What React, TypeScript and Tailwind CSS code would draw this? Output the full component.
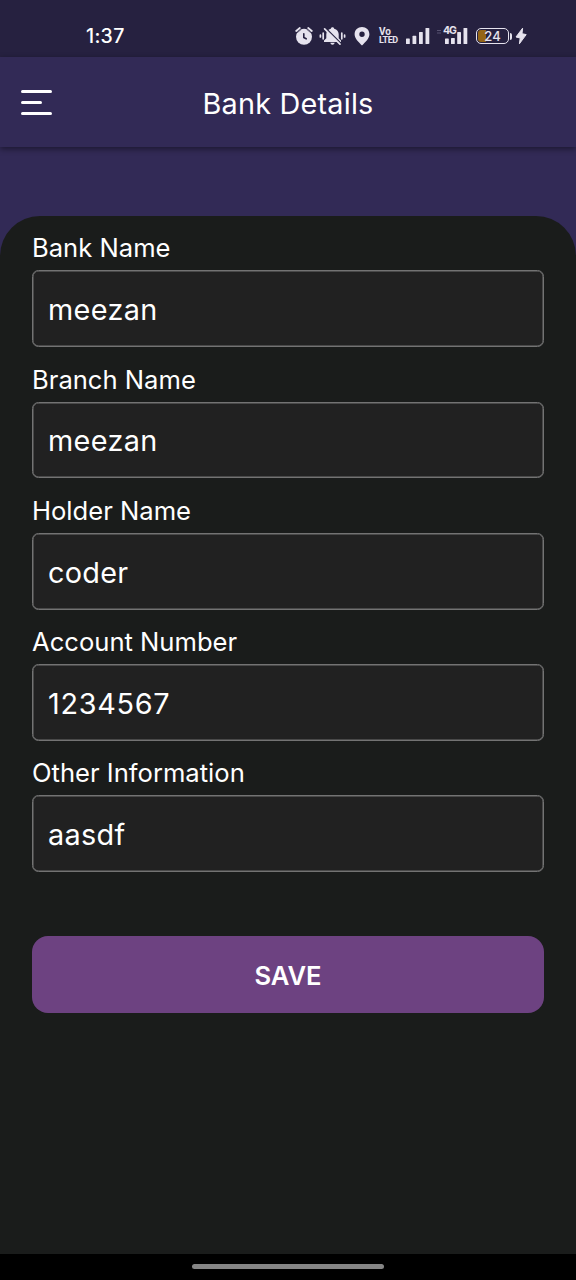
import React from "react";

const fields = [
  { label: "Bank Name", value: "meezan", tracking: "tracking-[0.35px]" },
  { label: "Branch Name", value: "meezan", tracking: "tracking-[0.35px]" },
  { label: "Holder Name", value: "coder", tracking: "tracking-[0.3px]" },
  { label: "Account Number", value: "1234567", tracking: "tracking-[0.7px]" },
  { label: "Other Information", value: "aasdf", tracking: "tracking-[0.35px]" },
];

function AlarmIcon() {
  return (
    <svg className="h-5 w-[18px]" viewBox="0 0 18 20" fill="none">
      <circle cx="9" cy="10.8" r="8" fill="#e6e3ee" />
      <path d="M1.2 5 4.8 2M16.8 5 13.2 2" stroke="#e6e3ee" strokeWidth="1.8" strokeLinecap="round" />
      <path d="M2.4 6.6 6.4 3.2M15.6 6.6 11.6 3.2" stroke="#262140" strokeWidth="0.7" />
      <path d="M8.8 7.8v3.7l2.4 1.3" stroke="#262140" strokeWidth="1.6" strokeLinecap="round" />
    </svg>
  );
}

function MutedBellIcon() {
  return (
    <svg className="ml-1.5 h-5 w-[27px]" viewBox="0 0 27 20" fill="none">
      <path d="M13.5 1.2c1 0 1.6.6 1.7 1.5 2.8.8 4.5 2.8 4.5 5.600v3.900l2.300 2.300v1.600H5v-1.600l2.300-2.300V8.300c0-2.800 1.700-4.800 4.500-5.600.1-.9.7-1.500 1.700-1.500Z" fill="#e6e3ee" />
      <path d="M11.3 16.8h4.400c-.3 1.300-1.100 2-2.200 2s-1.900-.7-2.200-2Z" fill="#e6e3ee" />
      <path d="M6.800 2.400 22.300 17.900" stroke="#262140" strokeWidth="1.5" />
      <path d="M5.600 2.800 21 18.200" stroke="#e6e3ee" strokeWidth="1.700" strokeLinecap="round" />
      <path d="M1.400 9.200v1.800M4.200 7.200v5.600M22.800 7.200v5.600M25.600 9.200v1.800" stroke="#e6e3ee" strokeWidth="1.700" strokeLinecap="round" />
    </svg>
  );
}

function PinIcon() {
  return (
    <svg className="ml-2 h-5 w-4" viewBox="0 0 16 20">
      <path fillRule="evenodd" d="M8 1C3.8 1 .6 4.1.6 8.2.6 12.5 4.500 16 8 19.400c3.500-3.400 7.400-6.900 7.400-11.200C15.400 4.100 12.200 1 8 1Zm0 4.600a2.700 2.700 0 1 1 0 5.400 2.700 2.700 0 0 1 0-5.400Z" fill="#e6e3ee" />
    </svg>
  );
}

function SignalIcon() {
  return (
    <svg className="ml-[8px] h-5 w-6" viewBox="0 0 24 20" fill="#e6e3ee">
      <rect x="0" y="12.5" width="3.8" height="5.5" rx=".6" />
      <rect x="6.5" y="9.8" width="3.8" height="8.2" rx=".6" />
      <rect x="13" y="6" width="3.8" height="12" rx=".6" />
      <rect x="19.5" y="2" width="3.8" height="16" rx=".6" />
    </svg>
  );
}

function MobileDataIcon() {
  return (
    <div className="relative ml-[6px] h-5 w-8">
      <svg className="h-5 w-8" viewBox="0 0 32 20" fill="#e6e3ee">
        <path d="M1 4.500h4M1 7h4" stroke="#575270" strokeWidth="1.2" />
        <rect x="9" y="12.5" width="3.8" height="5.5" rx=".6" />
        <rect x="15" y="12" width="3.8" height="6" rx=".6" />
        <rect x="21.2" y="6" width="3.8" height="12" rx=".6" />
        <rect x="27.5" y="2" width="3.8" height="16" rx=".6" />
      </svg>
      <span className="absolute left-[7px] top-0 text-[10.5px] font-bold leading-[10px] tracking-[-1px]">4G</span>
    </div>
  );
}

function Battery() {
  return (
    <div className="ml-2 flex items-center">
      <div className="relative flex h-4 w-[33px] items-center justify-center overflow-hidden rounded-[5px] border-[1.5px] border-[#e6e3ee] bg-[#262140]">
        <div className="absolute bottom-[1px] left-[1px] top-[1px] w-[8px] rounded-l-[3px] bg-[#946516]" />
        <span className="relative text-[13px] font-medium leading-none">24</span>
      </div>
      <div className="ml-[1px] h-[7px] w-[1.5px] rounded-r bg-[#e6e3ee]" />
    </div>
  );
}

function BoltIcon() {
  return (
    <svg className="ml-[3px] h-5 w-3" viewBox="0 0 12 20" fill="#e6e3ee">
      <path d="M7.6 2.200 1 11l4.200 1-.8 5.800 6.800-9.200L7 7.700Z" stroke="#e6e3ee" strokeWidth="1" strokeLinejoin="round" />
    </svg>
  );
}

export default function App() {
  return (
    <div className="flex h-[1280px] w-[576px] flex-col overflow-hidden bg-[#322a56] font-['Inter',sans-serif] text-white">
      <div className="flex h-[57px] shrink-0 items-start bg-[#262140] text-[#e6e3ee]">
        <span className="ml-[86px] mt-[24px] w-[209px] text-[19.5px] font-medium leading-6 tracking-[0.3px] text-white">1:37</span>
        <div className="mt-[26px] flex h-5 items-center">
          <AlarmIcon />
          <MutedBellIcon />
          <PinIcon />
          <div className="ml-[9px] flex w-[19px] flex-col font-['Roboto',sans-serif] text-[10px] font-bold leading-[8.5px]">
            <span>Vo</span>
            <span className="text-[9px] tracking-[-0.4px]">LTED</span>
          </div>
          <SignalIcon />
          <MobileDataIcon />
          <Battery />
          <BoltIcon />
        </div>
      </div>
      <header className="grid h-[90px] shrink-0 grid-cols-[80px_1fr_80px] items-center bg-[#322a56] shadow-[0_2px_6px_rgba(0,0,0,0.45)]">
        <button aria-label="Menu" className="ml-[21px] flex flex-col gap-[8px]">
          <span className="h-[3px] w-[31px] rounded-full bg-white" />
          <span className="h-[3px] w-[21px] rounded-full bg-white" />
          <span className="h-[3px] w-[31px] rounded-full bg-white" />
        </button>
        <h1 className="pt-[3px] text-center text-[28.8px] font-normal leading-9 tracking-[0.22px]">Bank Details</h1>
      </header>
      <main className="mt-[69px] flex grow flex-col rounded-t-[40px] bg-[#1a1c1b] px-8 pt-[14.4px]">
        {fields.map((field) => (
          <label key={field.label} className="flex h-[131.2px] shrink-0 flex-col">
            <span className="h-[40px] pt-[2px] text-[25.6px] leading-8">{field.label}</span>
            <input
              className={`h-[76.8px] w-full rounded-[6.4px] border border-[#737373] bg-[#212121] px-[15px] pt-[2px] text-[28.8px] outline-none shadow-[inset_0_0_0_0.5px_#737373] ${field.tracking}`}
              defaultValue={field.value}
            />
          </label>
        ))}
        <button className="mt-[49.6px] h-[76.8px] shrink-0 rounded-[16px] bg-[#6d4281] pt-[3px] text-[25.6px] font-semibold">SAVE</button>
      </main>
      <footer className="flex h-[26px] shrink-0 justify-center bg-black pt-[10px]">
        <div className="h-[5px] w-48 rounded-full bg-[#858585]" />
      </footer>
    </div>
  );
}
